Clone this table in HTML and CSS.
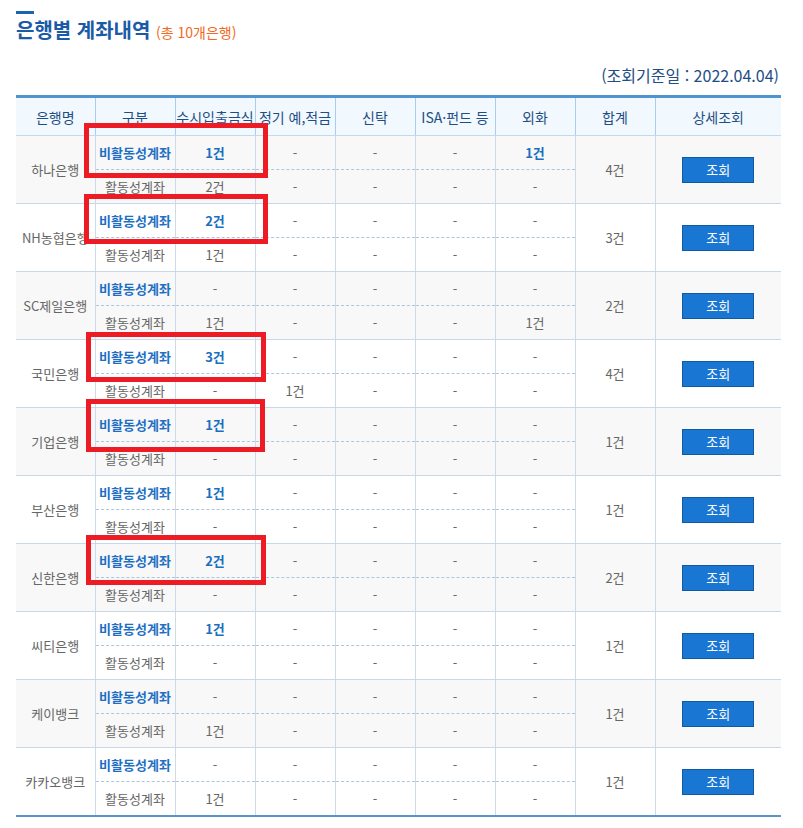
FILE: index.html
```html
<!DOCTYPE html>
<html lang="ko">
<head>
<meta charset="utf-8">
<title>은행별 계좌내역</title>
<link rel="stylesheet" href="styles.css">
</head>
<body>
<div class="page">
  <div class="title-bar"></div>
  <h1 class="title">은행별 계좌내역 <span class="count">(총 10개은행)</span></h1>
  <p class="date">(조회기준일 : 2022.04.04)</p>
  <table class="accounts">
    <colgroup>
      <col class="c-bank"><col class="c-std"><col class="c-std"><col class="c-std"><col class="c-std"><col class="c-std"><col class="c-std"><col class="c-std"><col class="c-detail">
    </colgroup>
    <thead>
      <tr><th>은행명</th><th>구분</th><th>수시입출금식</th><th>정기 예,적금</th><th>신탁</th><th>ISA·펀드 등</th><th>외화</th><th>합계</th><th>상세조회</th></tr>
    </thead>
    <tbody class="odd">
      <tr class="top"><td rowspan="2" class="bank">하나은행</td><td class="kind-in">비활동성계좌</td><td class="hl">1건</td><td>-</td><td>-</td><td>-</td><td class="hl">1건</td><td rowspan="2" class="sum">4건</td><td rowspan="2"><button class="btn">조회</button></td></tr>
      <tr class="bot"><td>활동성계좌</td><td>2건</td><td>-</td><td>-</td><td>-</td><td>-</td></tr>
    </tbody>
    <tbody>
      <tr class="top"><td rowspan="2" class="bank">NH농협은행</td><td class="kind-in">비활동성계좌</td><td class="hl">2건</td><td>-</td><td>-</td><td>-</td><td>-</td><td rowspan="2" class="sum">3건</td><td rowspan="2"><button class="btn">조회</button></td></tr>
      <tr class="bot"><td>활동성계좌</td><td>1건</td><td>-</td><td>-</td><td>-</td><td>-</td></tr>
    </tbody>
    <tbody class="odd">
      <tr class="top"><td rowspan="2" class="bank">SC제일은행</td><td class="kind-in">비활동성계좌</td><td>-</td><td>-</td><td>-</td><td>-</td><td>-</td><td rowspan="2" class="sum">2건</td><td rowspan="2"><button class="btn">조회</button></td></tr>
      <tr class="bot"><td>활동성계좌</td><td>1건</td><td>-</td><td>-</td><td>-</td><td>1건</td></tr>
    </tbody>
    <tbody>
      <tr class="top"><td rowspan="2" class="bank">국민은행</td><td class="kind-in">비활동성계좌</td><td class="hl">3건</td><td>-</td><td>-</td><td>-</td><td>-</td><td rowspan="2" class="sum">4건</td><td rowspan="2"><button class="btn">조회</button></td></tr>
      <tr class="bot"><td>활동성계좌</td><td>-</td><td>1건</td><td>-</td><td>-</td><td>-</td></tr>
    </tbody>
    <tbody class="odd">
      <tr class="top"><td rowspan="2" class="bank">기업은행</td><td class="kind-in">비활동성계좌</td><td class="hl">1건</td><td>-</td><td>-</td><td>-</td><td>-</td><td rowspan="2" class="sum">1건</td><td rowspan="2"><button class="btn">조회</button></td></tr>
      <tr class="bot"><td>활동성계좌</td><td>-</td><td>-</td><td>-</td><td>-</td><td>-</td></tr>
    </tbody>
    <tbody>
      <tr class="top"><td rowspan="2" class="bank">부산은행</td><td class="kind-in">비활동성계좌</td><td class="hl">1건</td><td>-</td><td>-</td><td>-</td><td>-</td><td rowspan="2" class="sum">1건</td><td rowspan="2"><button class="btn">조회</button></td></tr>
      <tr class="bot"><td>활동성계좌</td><td>-</td><td>-</td><td>-</td><td>-</td><td>-</td></tr>
    </tbody>
    <tbody class="odd">
      <tr class="top"><td rowspan="2" class="bank">신한은행</td><td class="kind-in">비활동성계좌</td><td class="hl">2건</td><td>-</td><td>-</td><td>-</td><td>-</td><td rowspan="2" class="sum">2건</td><td rowspan="2"><button class="btn">조회</button></td></tr>
      <tr class="bot"><td>활동성계좌</td><td>-</td><td>-</td><td>-</td><td>-</td><td>-</td></tr>
    </tbody>
    <tbody>
      <tr class="top"><td rowspan="2" class="bank">씨티은행</td><td class="kind-in">비활동성계좌</td><td class="hl">1건</td><td>-</td><td>-</td><td>-</td><td>-</td><td rowspan="2" class="sum">1건</td><td rowspan="2"><button class="btn">조회</button></td></tr>
      <tr class="bot"><td>활동성계좌</td><td>-</td><td>-</td><td>-</td><td>-</td><td>-</td></tr>
    </tbody>
    <tbody class="odd">
      <tr class="top"><td rowspan="2" class="bank">케이뱅크</td><td class="kind-in">비활동성계좌</td><td>-</td><td>-</td><td>-</td><td>-</td><td>-</td><td rowspan="2" class="sum">1건</td><td rowspan="2"><button class="btn">조회</button></td></tr>
      <tr class="bot"><td>활동성계좌</td><td>1건</td><td>-</td><td>-</td><td>-</td><td>-</td></tr>
    </tbody>
    <tbody>
      <tr class="top"><td rowspan="2" class="bank">카카오뱅크</td><td class="kind-in">비활동성계좌</td><td>-</td><td>-</td><td>-</td><td>-</td><td>-</td><td rowspan="2" class="sum">1건</td><td rowspan="2"><button class="btn">조회</button></td></tr>
      <tr class="bot"><td>활동성계좌</td><td>1건</td><td>-</td><td>-</td><td>-</td><td>-</td></tr>
    </tbody>
  </table>
  <div class="mark mark-1"></div>
  <div class="mark mark-2"></div>
  <div class="mark mark-3"></div>
  <div class="mark mark-4"></div>
  <div class="mark mark-5"></div>
</div>
</body>
</html>
```

FILE: styles.css
```css
html, body {
  margin: 0;
  padding: 0;
  background: #ffffff;
}

body {
  font-family: "Noto Sans CJK KR", "Noto Sans", sans-serif;
  color: #666666;
}

.page {
  position: relative;
  width: 765px;
  padding: 11px 22px 0 16px;
}

.title-bar {
  width: 18px;
  height: 3px;
  background: #1a64b0;
}

.title {
  margin: 3px 0 0;
  font-size: 20px;
  line-height: 26px;
  font-weight: 700;
  color: #1b5aa6;
}

.count {
  font-size: 14px;
  font-weight: 400;
  color: #f26a22;
}

.date {
  margin: 20px 0 0;
  height: 20px;
  line-height: 20px;
  font-size: 16px;
  color: #1f4e85;
  text-align: right;
  padding-right: 2px;
}

.accounts {
  margin-top: 10px;
  width: 765px;
  table-layout: fixed;
  border-collapse: collapse;
  border-top: 3px solid #4f94cd;
  border-bottom: 2px solid #5b94c8;
}

.c-bank { width: 79px; }
.c-std { width: 80px; }
.c-detail { width: 126px; }

.accounts th {
  height: 37px;
  padding: 0;
  font-size: 14px;
  font-weight: 400;
  color: #1e4f84;
  background: #f1f8fe;
  border-left: 1px solid #a9cdf0;
  border-bottom: 1px solid #c5d9ec;
  white-space: nowrap;
  overflow: visible;
}

.accounts th:first-child {
  border-left: none;
}

.accounts td {
  height: 33px;
  padding: 0;
  font-size: 13px;
  color: #666666;
  text-align: center;
  border-left: 1px solid #cbdbea;
  white-space: nowrap;
}

.accounts td.bank {
  border-left: none;
}

.accounts tr.top td {
  border-bottom: 1px dashed #adc6dc;
}

.accounts tr.top td[rowspan],
.accounts tr.bot td {
  border-bottom: 1px solid #c8d8e8;
}

.accounts tbody.odd td {
  background: #f8f8f8;
}

.accounts td.kind-in {
  color: #1d6fc4;
  font-weight: 700;
}

.accounts td.hl {
  color: #1a6fc0;
  font-weight: 700;
}

.btn {
  display: inline-block;
  width: 72px;
  height: 26px;
  margin: 0;
  padding: 0;
  font-family: inherit;
  font-size: 13px;
  color: #ffffff;
  background: #1976d2;
  border: 1px solid #0f5aa0;
  border-radius: 0;
  cursor: pointer;
  vertical-align: middle;
}

.mark {
  position: absolute;
  border: 5px solid #ed1c24;
  box-sizing: border-box;
  pointer-events: none;
}

.mark-1 { left: 84px; top: 123px; width: 184px; height: 55px; }
.mark-2 { left: 84px; top: 194px; width: 184px; height: 50px; }
.mark-3 { left: 86px; top: 332px; width: 180px; height: 50px; }
.mark-4 { left: 86px; top: 399px; width: 179px; height: 53px; }
.mark-5 { left: 86px; top: 535px; width: 180px; height: 50px; }
```
